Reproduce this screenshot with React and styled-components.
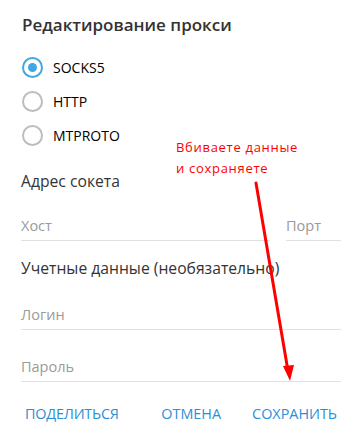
import React, { useState } from 'react';
import styled, { createGlobalStyle } from 'styled-components';

const Global = createGlobalStyle`
  html, body {
    margin: 0;
    padding: 0;
    background: #ffffff;
  }
  body {
    font-family: "Open Sans", "Noto Sans", sans-serif;
  }
`;

const Dialog = styled.div`
  position: relative;
  width: 354px;
  height: 439px;
  box-sizing: border-box;
  padding: 15px 13px 0 21px;
  display: flex;
  flex-direction: column;
  background: #fff;
`;

const Title = styled.div`
  font-size: 17px;
  font-weight: 600;
  line-height: 20px;
  color: #333;
  margin-left: 1px;
`;

const RadioGroup = styled.div`
  margin-top: 15px;
  display: flex;
  flex-direction: column;
`;

const RadioRow = styled.label`
  height: 34px;
  display: flex;
  align-items: center;
  gap: 10px;
  margin-left: 1px;
  font-size: 14px;
  color: #000;
  cursor: pointer;
`;

const Circle = styled.span`
  width: 21px;
  height: 21px;
  box-sizing: border-box;
  border-radius: 50%;
  border: 2px solid ${p => (p.$on ? '#40a7e3' : '#bdbdbd')};
  display: flex;
  align-items: center;
  justify-content: center;
  &::after {
    content: '';
    width: 9px;
    height: 9px;
    border-radius: 50%;
    background: ${p => (p.$on ? '#40a7e3' : 'transparent')};
  }
`;

const Section = styled.div`
  margin-top: ${p => p.$top}px;
  height: 24px;
  line-height: 24px;
  font-size: 15.7px;
  color: #333;
`;

const FieldRow = styled.div`
  display: flex;
  gap: 16px;
  margin-top: ${p => p.$top}px;
`;

const Field = styled.div`
  flex: ${p => p.$grow ? 1 : 'none'};
  width: ${p => p.$w ? p.$w + 'px' : 'auto'};
  height: 30px;
  box-sizing: border-box;
  border-bottom: 1px solid #e1e1e1;
  display: flex;
  align-items: center;
  font-size: 14.5px;
  color: #9a9a9a;
`;

const Buttons = styled.div`
  margin-top: 19px;
  height: 24px;
  display: flex;
  align-items: center;
  gap: 23px;
`;

const Btn = styled.button`
  border: none;
  background: none;
  padding: 0 4px;
  font-family: inherit;
  font-size: 14.4px;
  color: #2a8fd6;
  text-transform: uppercase;
  cursor: pointer;
  &:first-child {
    margin-right: auto;
    letter-spacing: -0.2px;
  }
`;

const Note = styled.div`
  position: absolute;
  left: 176px;
  top: 137px;
  font-size: 13px;
  line-height: 21px;
  letter-spacing: 0.7px;
  color: #ff0000;
`;

const Arrow = styled.svg`
  position: absolute;
  left: 0;
  top: 0;
  pointer-events: none;
`;

const kinds = ['SOCKS5', 'HTTP', 'MTPROTO'];

export default function App() {
  const [kind, setKind] = useState('SOCKS5');
  return (
    <>
      <Global />
      <Dialog>
        <Title>Редактирование прокси</Title>
        <RadioGroup>
          {kinds.map(k => (
            <RadioRow key={k} onClick={() => setKind(k)}>
              <Circle $on={kind === k} />
              {k}
            </RadioRow>
          ))}
        </RadioGroup>
        <Section $top={17}>Адрес сокета</Section>
        <FieldRow $top={18}>
          <Field $grow>Хост</Field>
          <Field $w={55}>Порт</Field>
        </FieldRow>
        <Section $top={15}>Учетные данные (необязательно)</Section>
        <FieldRow $top={20}>
          <Field $grow>Логин</Field>
        </FieldRow>
        <FieldRow $top={22}>
          <Field $grow>Пароль</Field>
        </FieldRow>
        <Buttons>
          <Btn>Поделиться</Btn>
          <Btn>Отмена</Btn>
          <Btn>Сохранить</Btn>
        </Buttons>
        <Note>
          Вбиваете данные
          <br />и сохраняете
        </Note>
        <Arrow width="354" height="439" viewBox="0 0 354 439">
          <line x1="256" y1="183" x2="287.5" y2="368" stroke="#ff0000" strokeWidth="3" strokeLinecap="round" />
          <polygon points="283,366 294,365 290,381" fill="#ff0000" />
        </Arrow>
      </Dialog>
    </>
  );
}
